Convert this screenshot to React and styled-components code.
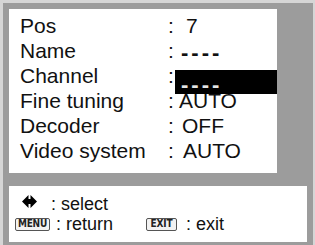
import styled, { createGlobalStyle } from "styled-components";

const Global = createGlobalStyle`
  html, body {
    margin: 0;
    background: #d6d6d6;
    overflow: hidden;
  }
`;

const Frame = styled.div`
  margin: 3px 0 0 3px;
  width: 310px;
  height: 242px;
  box-sizing: border-box;
  padding: 6px 6px 0 6px;
  background: #9c9c9c;
  display: flex;
  flex-direction: column;
  gap: 13px;
  font-family: "Liberation Sans", Arial, sans-serif;
  color: #111;
`;

const Menu = styled.div`
  width: 268px;
  height: 164px;
  box-sizing: border-box;
  padding: 4px 0 0 11px;
  background: #fff;
`;

const Row = styled.div`
  display: grid;
  grid-template-columns: 148px 7px 1fr;
  align-items: start;
  font-size: 21px;
  line-height: 25px;
  height: 25px;
`;

const Label = styled.span`
  white-space: nowrap;
`;

const Colon = styled.span``;

const Value = styled.span`
  padding-left: ${({ $indent }) => $indent}px;
  white-space: nowrap;
`;

const Dashes = styled(Value)`
  line-height: 22px;
  padding-top: 4px;
  font-weight: bold;
  font-size: 22px;
  letter-spacing: 3px;
`;

const Selected = styled(Dashes)`
  box-sizing: border-box;
  margin-top: 7px;
  height: 24px;
  padding-top: 5px;
  line-height: 19px;
  background: #000;
  color: #e4e4e4;
`;

const Help = styled.div`
  width: 298px;
  height: 56px;
  box-sizing: border-box;
  padding: 8px 0 0 6px;
  background: #fff;
  font-size: 18px;
  line-height: 20px;
`;

const Line = styled.div`
  display: flex;
  align-items: center;
  height: 20px;
`;

const Hint = styled.div`
  display: flex;
  align-items: center;
  width: ${({ $w }) => $w || "auto"};
`;

const Arrow = styled.svg`
  flex: none;
  margin: -5px 0 0 7px;
  width: 15px;
  height: 13px;
`;

const KeyCap = styled.span`
  display: inline-flex;
  align-items: center;
  justify-content: center;
  box-sizing: border-box;
  width: ${({ $w }) => $w};
  height: 13px;
  border: 1.5px solid #555;
  border-radius: 2px;
  background: #f2f2f2;
  font-family: "Liberation Sans Narrow", "DejaVu Sans Condensed", "Liberation Sans", sans-serif;
  font-weight: bold;
  font-size: 10px;
  line-height: 1;
  letter-spacing: -0.2px;
  color: #222;
`;

const Text = styled.span`
  margin-left: ${({ $gap }) => $gap}px;
  white-space: pre;
`;

const rows = [
  { label: "Pos", value: "7", indent: 11 },
  { label: "Name", value: "----", indent: 6, dash: true },
  { label: "Channel", value: "----", indent: 6, selected: true },
  { label: "Fine tuning", value: "AUTO", indent: 4 },
  { label: "Decoder", value: "OFF", indent: 7 },
  { label: "Video system", value: "AUTO", indent: 8 },
];

export default function App() {
  return (
    <>
      <Global />
      <Frame>
        <Menu>
          {rows.map((r) => {
            const V = r.selected ? Selected : r.dash ? Dashes : Value;
            return (
              <Row key={r.label}>
                <Label>{r.label}</Label>
                <Colon>:</Colon>
                <V $indent={r.indent}>{r.value}</V>
              </Row>
            );
          })}
        </Menu>
        <Help>
          <Line>
            <Hint>
              <Arrow viewBox="0 0 15 13">
                <polygon points="0,6.5 6.5,0 6.5,4 8.5,4 8.5,0 15,6.5 8.5,13 8.5,9 6.5,9 6.5,13" fill="#000" />
              </Arrow>
              <Text $gap={14}>: select</Text>
            </Hint>
          </Line>
          <Line>
            <Hint $w="131px">
              <KeyCap $w="35px">MENU</KeyCap>
              <Text $gap={6}>: return</Text>
            </Hint>
            <Hint>
              <KeyCap $w="31px">EXIT</KeyCap>
              <Text $gap={9}>: exit</Text>
            </Hint>
          </Line>
        </Help>
      </Frame>
    </>
  );
}
